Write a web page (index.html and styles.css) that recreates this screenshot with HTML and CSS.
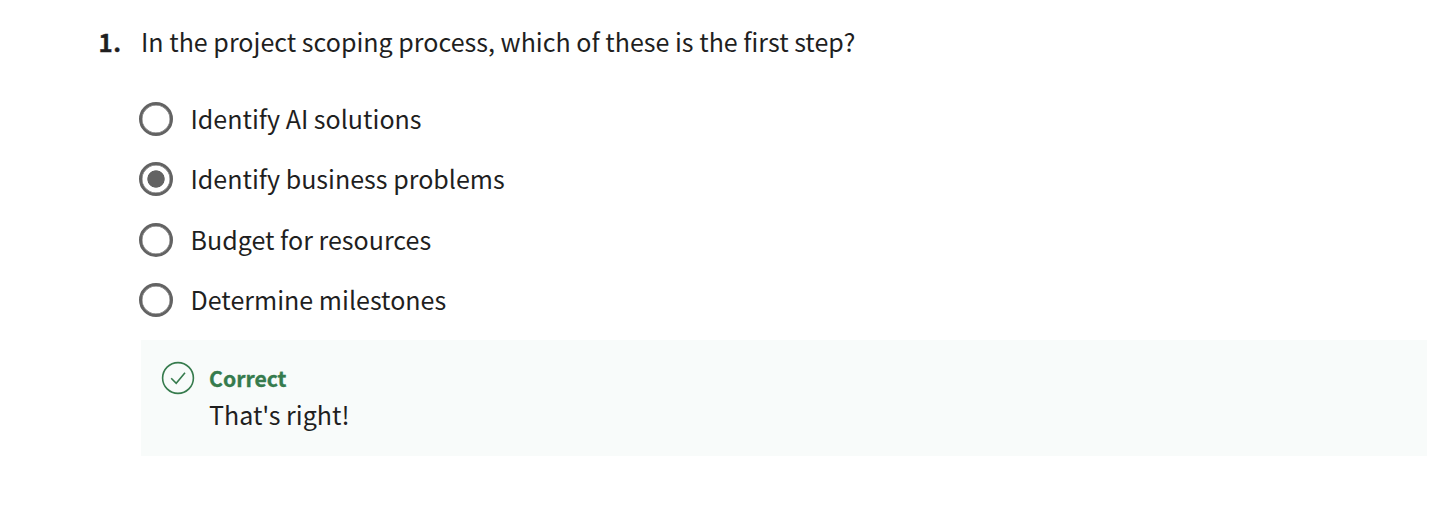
FILE: index.html
```html
<!DOCTYPE html>
<html lang="en">
<head>
<meta charset="utf-8">
<title>Quiz question</title>
<link rel="stylesheet" href="styles.css">
</head>
<body>
<main class="question">
  <div class="number">1.</div>
  <div class="content">
    <h1 class="prompt">In the project scoping process, which of these is the first step?</h1>
    <div class="options">
      <label class="option"><input class="radio" type="radio" name="q1"><span class="label">Identify AI solutions</span></label>
      <label class="option"><input class="radio" type="radio" name="q1" checked><span class="label">Identify business problems</span></label>
      <label class="option"><input class="radio" type="radio" name="q1"><span class="label">Budget for resources</span></label>
      <label class="option"><input class="radio" type="radio" name="q1"><span class="label">Determine milestones</span></label>
    </div>
    <section class="feedback">
      <svg class="check" viewBox="0 0 34 34" fill="none" stroke="#367b4d" stroke-width="1.6"><circle cx="17" cy="17" r="15.4"/><path d="M10.2 17.2l5 5 8.8-10.4"/></svg>
      <div class="feedback-body">
        <strong class="verdict">Correct</strong>
        <p class="message">That's right!</p>
      </div>
    </section>
  </div>
</main>
</body>
</html>
```
FILE: styles.css
```css
* { box-sizing: border-box; }
body { margin: 0; background: #fff; color: #1f1f1f; font: 25.06px/36px "Noto Sans CJK SC", "Noto Sans", sans-serif; }
.question { display: grid; grid-template-columns: 43px 1286px; padding: 23px 0 0 98px; }
.number { padding: 1px 0 0 0.5px; font-weight: 700; font-size: 24px; letter-spacing: 0.7px; -webkit-text-stroke: 0.4px; }
.prompt { margin: 0; font-size: inherit; font-weight: 400; white-space: nowrap; }
.options { padding-top: 30px; }
.option { display: flex; align-items: center; gap: 17.5px; height: 60.33px; margin-left: -2px; white-space: nowrap; }
.label { padding-bottom: 2.2px; }
.radio { appearance: none; flex: none; width: 34px; height: 34px; margin: 0; border: 3px solid #636363; border-radius: 50%; box-shadow: inset 0 0 0 0.4px #636363; }
.radio:checked { background: radial-gradient(circle, #636363 8.3px, transparent 9px); }
.feedback { display: flex; gap: 14px; height: 116px; margin-top: 10px; padding: 21px 20px; background: #f8fbfa; }
.check { flex: none; width: 34px; height: 34px; }
.feedback-body { margin-top: -1px; }
.verdict { display: block; color: #367b4d; font-size: 21.2px; -webkit-text-stroke: 0.3px; }
.message { margin: 0; }
```
